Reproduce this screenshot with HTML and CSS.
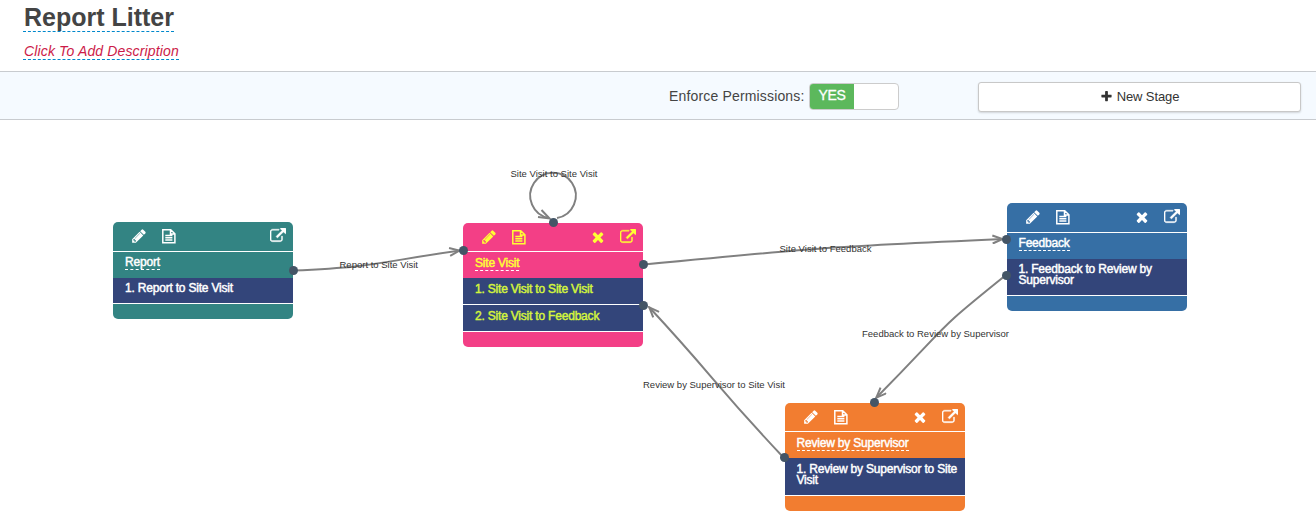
FILE: index.html
```html
<!DOCTYPE html>
<html lang="en">
<head>
<meta charset="utf-8">
<title>Report Litter</title>
<link rel="stylesheet" href="styles.css">
</head>
<body>
<svg class="defs" width="0" height="0">
  <symbol id="pencil" viewBox="0 0 1792 1792"><path d="M491 1536l91-91-235-235-91 91v107h128v128h107zm523-928q0-22-22-22-10 0-17 7l-542 542q-7 7-7 17 0 22 22 22 10 0 17-7l542-542q7-7 7-17zm-54-192l416 416-832 832h-416v-416zm683 96q0 53-37 90l-166 166-416-416 166-165q36-38 90-38 53 0 91 38l235 234q37 39 37 91z"/></symbol>
  <symbol id="file" viewBox="0 0 16 16"><path class="outline" d="M1.800 1.700H9.700L13.900 5.800V14.800H1.800ZM9.500 1.700V6H13.900M4.300 7.500H11.400M4.300 9.800H11.400M4.300 12.100H11.400"/></symbol>
  <symbol id="times" viewBox="0 0 1792 1792"><path d="M1490 1322q0 40-28 68l-136 136q-28 28-68 28t-68-28l-294-294-294 294q-28 28-68 28t-68-28l-136-136q-28-28-28-68t28-68l294-294-294-294q-28-28-28-68t28-68l136-136q28-28 68-28t68 28l294 294 294-294q28-28 68-28t68 28l136 136q28 28 28 68t-28 68l-294 294 294 294q28 28 28 68z"/></symbol>
  <symbol id="external" viewBox="0 0 1792 1792"><path class="heavy" d="M1408 928v320q0 119-84.5 203.5t-203.5 84.5h-832q-119 0-203.5-84.5t-84.5-203.5v-832q0-119 84.5-203.5t203.5-84.5h704q14 0 23 9t9 23v64q0 14-9 23t-23 9h-704q-66 0-113 47t-47 113v832q0 66 47 113t113 47h832q66 0 113-47t47-113v-320q0-14 9-23t23-9h64q14 0 23 9t9 23zm384-864v512q0 26-19 45t-45 19-45-19l-176-176-652 652q-10 10-23 10t-23-10l-114-114q-10-10-10-23t10-23l652-652-176-176q-19-19-19-45t19-45 45-19h512q26 0 45 19t19 45z"/></symbol>
  <symbol id="plus" viewBox="0 0 1792 1792"><path d="M1600 736v192q0 40-28 68t-68 28h-416v416q0 40-28 68t-68 28h-192q-40 0-68-28t-28-68v-416h-416q-40 0-68-28t-28-68v-192q0-40 28-68t68-28h416v-416q0-40 28-68t68-28h192q40 0 68 28t28 68v416h416q40 0 68 28t28 68z"/></symbol>
</svg>

<header class="page-header">
  <h1 class="title">Report Litter</h1>
  <a class="description">Click To Add Description</a>
</header>

<div class="toolbar">
  <span class="perm-label">Enforce Permissions:</span>
  <div class="switch"><span class="switch-on">YES</span></div>
  <button class="new-stage"><svg class="plus"><use href="#plus"/></svg>New Stage</button>
</div>

<main class="canvas">
  <section class="stage stage-report">
    <div class="tools"><svg class="icon"><use href="#pencil"/></svg><svg class="icon"><use href="#file"/></svg><svg class="icon push"><use href="#external"/></svg></div>
    <div class="name"><span>Report</span></div>
    <div class="action">1. Report to Site Visit</div>
  </section>
  <section class="stage stage-visit">
    <div class="tools"><svg class="icon"><use href="#pencil"/></svg><svg class="icon"><use href="#file"/></svg><svg class="icon push"><use href="#times"/></svg><svg class="icon"><use href="#external"/></svg></div>
    <div class="name"><span>Site Visit</span></div>
    <div class="action">1. Site Visit to Site Visit</div>
    <div class="action">2. Site Visit to Feedback</div>
  </section>
  <section class="stage stage-feedback">
    <div class="tools"><svg class="icon"><use href="#pencil"/></svg><svg class="icon"><use href="#file"/></svg><svg class="icon push"><use href="#times"/></svg><svg class="icon"><use href="#external"/></svg></div>
    <div class="name"><span>Feedback</span></div>
    <div class="action">1. Feedback to Review by<br>Supervisor</div>
  </section>
  <section class="stage stage-review">
    <div class="tools"><svg class="icon"><use href="#pencil"/></svg><svg class="icon"><use href="#file"/></svg><svg class="icon push"><use href="#times"/></svg><svg class="icon"><use href="#external"/></svg></div>
    <div class="name"><span>Review by Supervisor</span></div>
    <div class="action">1. Review by Supervisor to Site<br>Visit</div>
  </section>

  <svg class="links" viewBox="0 120 1316 398">
    <defs>
      <marker id="arrow" viewBox="0 0 13 10" refX="12" refY="5" markerWidth="13" markerHeight="10" markerUnits="userSpaceOnUse" orient="auto">
        <path class="head" d="M1.500 1L11.500 5L1.500 9"/>
      </marker>
    </defs>
    <path class="link" marker-end="url(#arrow)" d="M293 270.500C378 267 378 262 460 250.500"/>
    <path class="link" marker-end="url(#arrow)" d="M644 264.500C825 247 825 247 1003 239"/>
    <path class="link" marker-end="url(#arrow)" d="M1006 275C930 336 955 318 876 398"/>
    <path class="link" marker-end="url(#arrow)" d="M784 458C715 385 715 378 649 307"/>
    <path class="link" d="M557 218A22.800 22.800 0 1 0 549 218"/>
    <path class="head" d="M538 217L549.500 218.500L541.500 210"/>
    <g class="ports">
      <circle cx="293.500" cy="270.500" r="4.500"/><circle cx="463.500" cy="250.500" r="4.500"/>
      <circle cx="553.500" cy="222.500" r="4.500"/><circle cx="643.500" cy="264.500" r="4.500"/>
      <circle cx="643.500" cy="305.500" r="4.500"/><circle cx="1006.500" cy="239.500" r="4.500"/>
      <circle cx="1006.500" cy="275.500" r="4.500"/><circle cx="874.500" cy="402.500" r="4.500"/>
      <circle cx="784.500" cy="457.500" r="4.500"/>
    </g>
    <g class="labels">
      <text x="339.500" y="268" textLength="78.500">Report to Site Visit</text>
      <text x="510.500" y="177" textLength="87">Site Visit to Site Visit</text>
      <text x="779.500" y="252" textLength="92">Site Visit to Feedback</text>
      <text x="862" y="337" textLength="147">Feedback to Review by Supervisor</text>
      <text x="643" y="388" textLength="142">Review by Supervisor to Site Visit</text>
    </g>
  </svg>
</main>
</body>
</html>
```

FILE: styles.css
```css
* { box-sizing: border-box; }

body {
  margin: 0;
  height: 518px;
  overflow: hidden;
  background: #fff;
  color: #444;
  font-family: "Liberation Sans", Arial, sans-serif;
  display: flex;
  flex-direction: column;
}

.defs { position: absolute; }

.page-header {
  height: 71px;
  padding: 4px 0 0 23px;
  display: flex;
  flex-direction: column;
  align-items: flex-start;
}

.title {
  margin: 0;
  height: 28px;
  font-size: 25px;
  line-height: 27px;
  padding-left: 1px;
  border-bottom: 1px dashed #08c;
}

.description {
  margin-top: 10px;
  height: 18px;
  padding-left: 1px;
  font-size: 14px;
  line-height: 18px;
  letter-spacing: .14px;
  font-style: italic;
  color: #cc1a48;
  border-bottom: 1px dashed #08c;
}

.toolbar {
  height: 49px;
  flex: none;
  border-top: 1px solid #c8cbcf;
  border-bottom: 1px solid #c8cbcf;
  background: #f5faff;
  display: flex;
  align-items: flex-start;
  justify-content: flex-end;
  padding: 10px 15px 0 0;
}

.perm-label {
  font-size: 14px;
  line-height: 28px;
  letter-spacing: .16px;
  margin-right: 4.500px;
}

.switch {
  width: 90px;
  height: 27px;
  margin: 1px 79px 0 0;
  border: 1px solid #ccc;
  border-radius: 4px;
  background: #fff;
  overflow: hidden;
}

.switch-on {
  display: block;
  width: 44px;
  height: 25px;
  background: #5cb85c;
  color: #fff;
  font-size: 14px;
  line-height: 23px;
  text-align: center;
  letter-spacing: -.3px;
  -webkit-text-stroke: .3px #fff;
}

.new-stage {
  width: 323px;
  height: 30px;
  padding: 0 0 1px;
  border: 1px solid #c8c8c8;
  border-radius: 3px;
  box-shadow: 0 1px 2px rgba(0, 0, 0, .15);
  background: #fff;
  color: #333;
  font: 13px "Liberation Sans", Arial, sans-serif;
  letter-spacing: -.1px;
  display: flex;
  align-items: center;
  justify-content: center;
}

.plus {
  width: 13px;
  height: 13px;
  margin-right: 4px;
  fill: #333;
}

.canvas {
  position: relative;
  height: 398px;
}

.links {
  position: absolute;
  left: 0;
  top: 0;
  width: 1316px;
  height: 398px;
}

.link { fill: none; stroke: #808080; stroke-width: 2; }
.head { fill: none; stroke: #808080; stroke-width: 2; }
.ports { fill: #456; }
.labels { fill: #333; font-size: 9.5px; }

.stage {
  position: absolute;
  width: 180px;
  border-radius: 5px;
  overflow: hidden;
  color: #fff;
  fill: currentColor;
  font-size: 12px;
  line-height: 11px;
}

.stage-report { left: 113px; top: 102px; height: 97px; background: #338483; }
.stage-visit { left: 463px; top: 103px; height: 124px; background: #f33f86; color: #ff3; }
.stage-feedback { left: 1007px; top: 83px; height: 108px; background: #366fa5; }
.stage-review { left: 785px; top: 283px; height: 108px; background: #f27d30; }

.tools {
  height: 30px;
  padding: 6px 7px 0 18px;
  border-bottom: 1px solid #fff;
  display: flex;
  gap: 14px;
}

.stage-visit .tools,
.stage-review .tools { height: 29px; }

.icon { width: 16px; height: 16px; flex: none; }
.push { margin-left: auto; }
.outline { fill: none; stroke: currentColor; stroke-width: 1.5; }
.heavy { stroke: currentColor; stroke-width: 45; }

.name {
  height: 26px;
  padding: 4px 0 0 12px;
  -webkit-text-stroke: .45px currentColor;
  letter-spacing: -.2px;
}

.name span {
  display: inline-block;
  height: 14px;
  line-height: 13px;
  border-bottom: 1px dashed #fff;
}

.action {
  height: 26px;
  padding: 5px 12px 0;
  background: #33457a;
  border-bottom: 1px solid #fff;
  white-space: nowrap;
  -webkit-text-stroke: .45px currentColor;
  letter-spacing: -.2px;
}

.stage-visit .name, .stage-review .name { padding-top: 5px; }
.stage-visit .action { height: 27px; padding-top: 6px; color: #d5f53c; }
.stage-feedback .action { height: 37px; }
.stage-review .action { height: 38px; padding-top: 6px; }
.stage-feedback .name, .stage-feedback .action,
.stage-review .name, .stage-review .action { padding-left: 11.500px; }
```
